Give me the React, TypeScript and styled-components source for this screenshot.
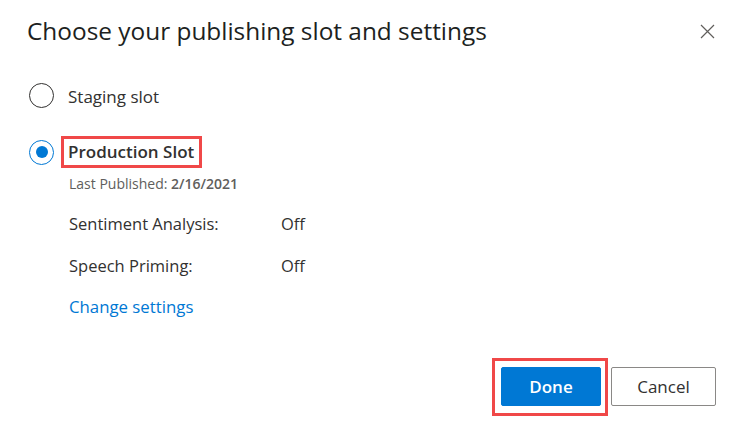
import React from "react";
import styled, { createGlobalStyle } from "styled-components";

const Global = createGlobalStyle`
  html, body { margin: 0; padding: 0; background: #ffffff; }
  body { font-family: "Open Sans", "Noto Sans", sans-serif; color: #323130; }
  * { box-sizing: border-box; }
`;

const Dialog = styled.div`
  width: 737px;
  height: 435px;
  padding: 15px 21px 0 27px;
  display: flex;
  flex-direction: column;
`;

const Header = styled.div`
  display: flex;
  align-items: center;
  justify-content: space-between;
  height: 32px;
`;

const Title = styled.h1`
  margin: 0;
  font-size: 24.4px;
  font-weight: 400;
  line-height: 32px;
  color: #201f1e;
  letter-spacing: 0;
`;

const CloseButton = styled.button`
  border: none;
  background: none;
  padding: 0;
  width: 18px;
  height: 18px;
  display: flex;
  align-items: center;
  justify-content: center;
  cursor: pointer;
`;

const Options = styled.div`
  display: flex;
  flex-direction: column;
  margin-top: 35px;
  padding-left: 2px;
`;

const OptionRow = styled.label<{ $gap?: number }>`
  display: flex;
  align-items: center;
  gap: 14px;
  height: 26px;
  margin-top: ${(p) => p.$gap ?? 0}px;
`;

const Radio = styled.span<{ $checked?: boolean }>`
  width: 25px;
  height: 25px;
  border-radius: 50%;
  border: 1.5px solid ${(p) => (p.$checked ? "#0078d4" : "#323130")};
  display: flex;
  align-items: center;
  justify-content: center;
  flex-shrink: 0;
  &::after {
    content: "";
    display: ${(p) => (p.$checked ? "block" : "none")};
    width: 12px;
    height: 12px;
    border-radius: 50%;
    background: #0078d4;
  }
`;

const OptionLabel = styled.span<{ $strong?: boolean; $drop?: number }>`
  font-size: 17px;
  font-weight: ${(p) => (p.$strong ? 600 : 400)};
  color: #323130;
  line-height: 24px;
  padding-top: ${(p) => p.$drop ?? 0}px;
`;

const Highlight = styled.span`
  border: 3px solid #f04848;
  padding: 1px 5px 1px 4px;
  margin-left: -7px;
  display: inline-flex;
  align-items: center;
  height: 32px;
`;

const Details = styled.div`
  padding-left: 40px;
  display: flex;
  flex-direction: column;
`;

const Published = styled.div`
  font-size: 14px;
  color: #605e5c;
  margin-top: 9px;
  line-height: 20px;
  b {
    font-weight: 600;
    color: #605e5c;
  }
`;

const SettingsGrid = styled.div`
  display: grid;
  grid-template-columns: 212px auto;
  row-gap: 18px;
  margin-top: 18px;
  font-size: 16.5px;
  line-height: 24px;
`;

const SettingLabel = styled.span`
  color: #323130;
`;

const SettingValue = styled.span`
  color: #323130;
`;

const Link = styled.a`
  margin-top: 17px;
  font-size: 16.8px;
  line-height: 24px;
  color: #0078d4;
  text-decoration: none;
  cursor: pointer;
`;

const Footer = styled.div`
  display: flex;
  justify-content: flex-end;
  gap: 10px;
  margin-top: auto;
  margin-bottom: 29px;
`;

const Outline = styled.span`
  border: 3px solid #f04848;
  padding: 6px 4px 7px 6px;
  margin: -9px -7px -10px 0;
  display: inline-flex;
`;

const Button = styled.button<{ $primary?: boolean }>`
  width: 100px;
  height: 39px;
  border-radius: 2px;
  font-family: "Open Sans", "Noto Sans", sans-serif;
  font-size: 17px;
  font-weight: 600;
  border: 1px solid ${(p) => (p.$primary ? "#0078d4" : "#8a8886")};
  background: ${(p) => (p.$primary ? "#0078d4" : "#ffffff")};
  color: ${(p) => (p.$primary ? "#ffffff" : "#323130")};
  cursor: pointer;
`;

const CancelButton = styled(Button)`
  width: 105px;
  font-weight: 400;
`;

export default function App() {
  return (
    <>
      <Global />
      <Dialog>
        <Header>
          <Title>Choose your publishing slot and settings</Title>
          <CloseButton aria-label="Close">
            <svg width="15" height="15" viewBox="0 0 15 15">
              <path d="M1 1 L14 14 M14 1 L1 14" stroke="#605e5c" strokeWidth="1.2" />
            </svg>
          </CloseButton>
        </Header>
        <Options>
          <OptionRow>
            <Radio />
            <OptionLabel $drop={4}>Staging slot</OptionLabel>
          </OptionRow>
          <OptionRow $gap={31}>
            <Radio $checked />
            <Highlight>
              <OptionLabel $strong>Production Slot</OptionLabel>
            </Highlight>
          </OptionRow>
          <Details>
            <Published>
              Last Published: <b>2/16/2021</b>
            </Published>
            <SettingsGrid>
              <SettingLabel>Sentiment Analysis:</SettingLabel>
              <SettingValue>Off</SettingValue>
              <SettingLabel>Speech Priming:</SettingLabel>
              <SettingValue>Off</SettingValue>
            </SettingsGrid>
            <Link>Change settings</Link>
          </Details>
        </Options>
        <Footer>
          <Outline>
            <Button $primary>Done</Button>
          </Outline>
          <CancelButton>Cancel</CancelButton>
        </Footer>
      </Dialog>
    </>
  );
}
